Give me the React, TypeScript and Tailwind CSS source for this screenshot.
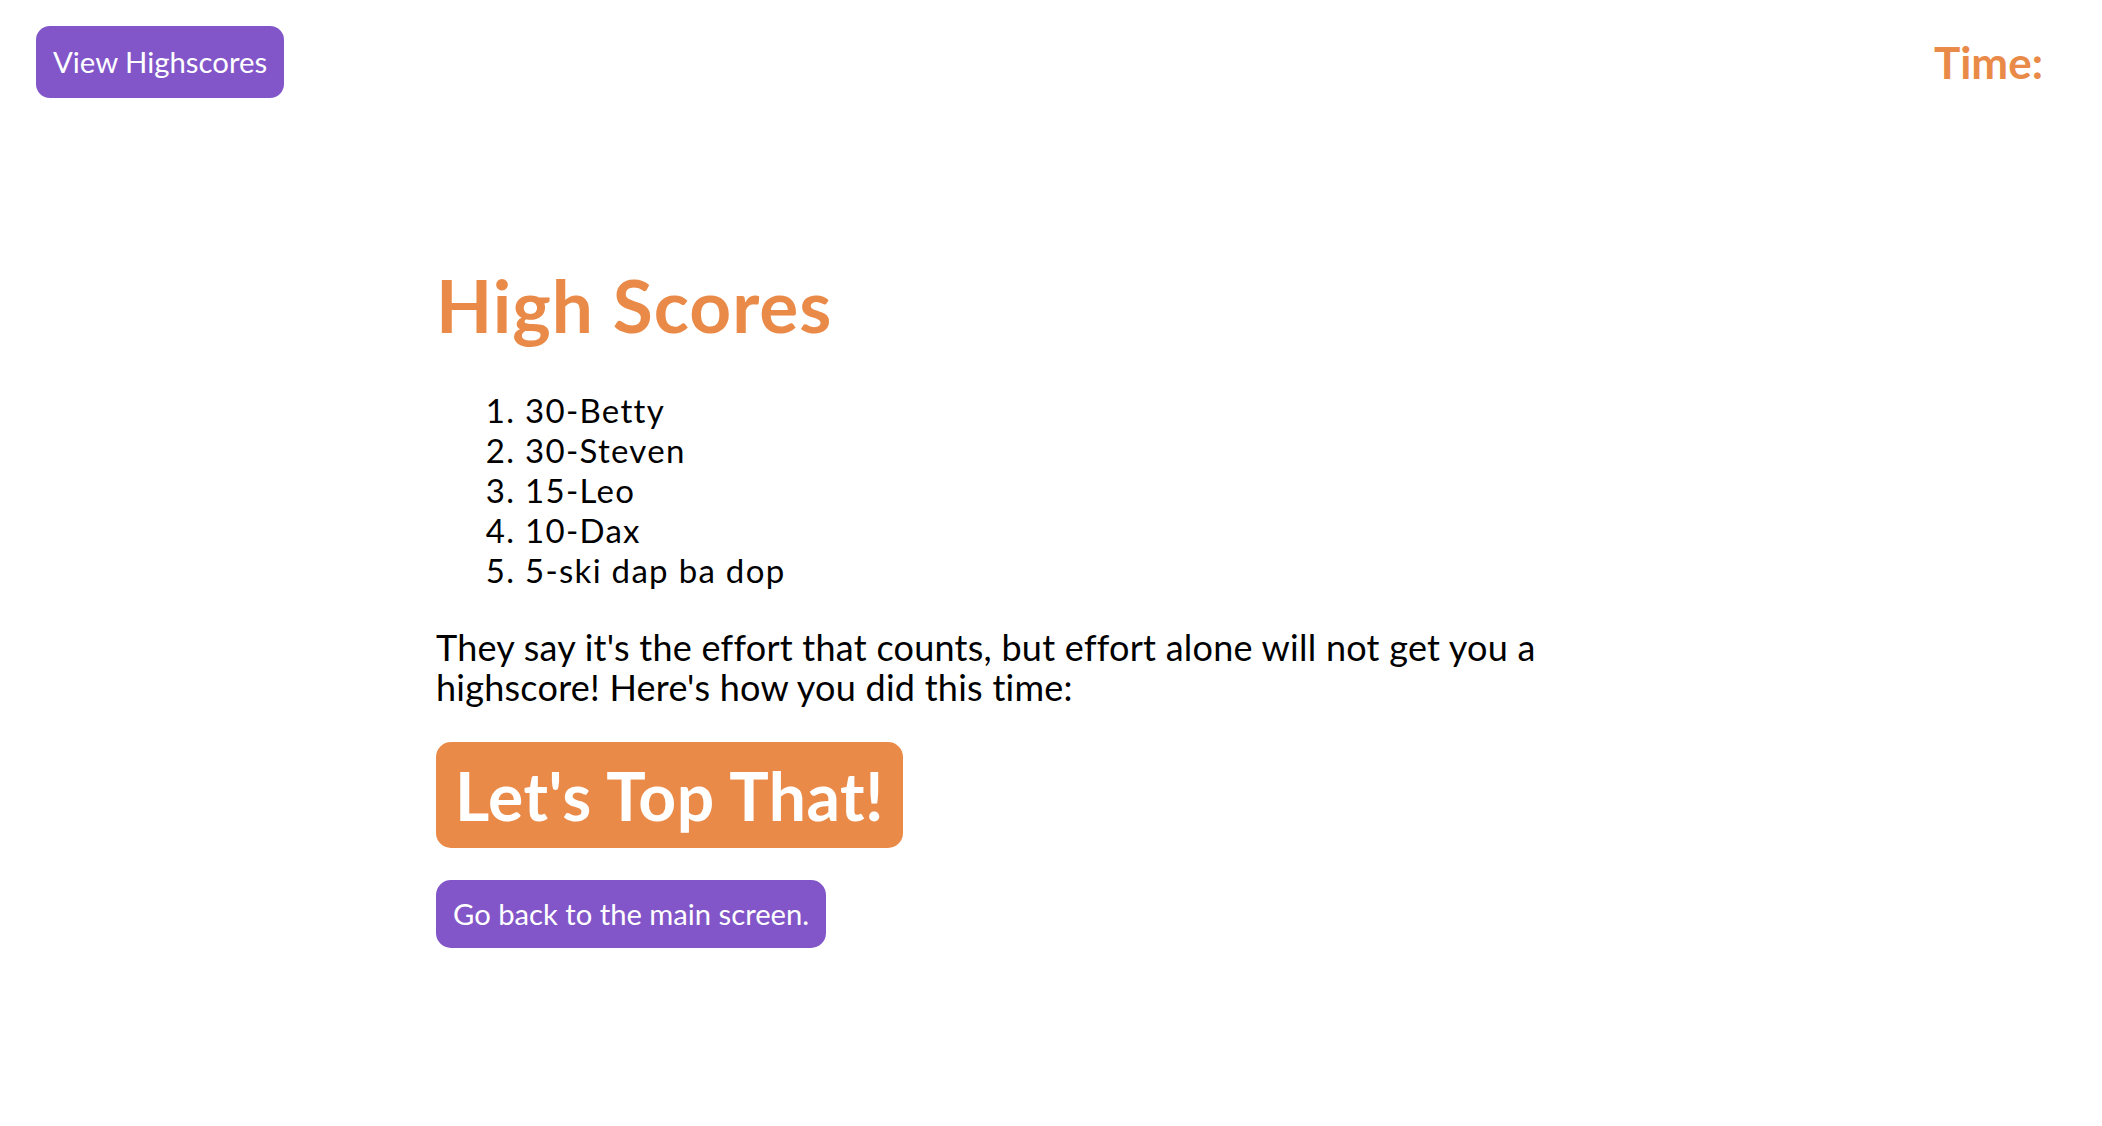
import React from "react";

export default function App() {
  const scores = ["30-Betty", "30-Steven", "15-Leo", "10-Dax", "5-ski dap ba dop"];
  return (
    <div className="min-h-screen bg-white font-['Lato',sans-serif] text-black">
      <header className="flex items-center justify-between pl-[36px] pr-[59px] pt-[26px]">
        <button className="h-[72px] rounded-[14px] bg-[#8256c9] px-[17px] text-[29.3px] text-white">
          View Highscores
        </button>
        <div className="text-[44px] font-bold leading-none text-[#ea8a48]">Time:</div>
      </header>
      <main className="mx-auto w-[1230px]">
        <h1 className="mt-[164px] text-[73px] font-bold leading-[86px] tracking-[1px] text-[#ea8a48]">High Scores</h1>
        <ol className="mt-[42px] list-decimal pl-[89px] text-[33px] leading-[40px] tracking-[1.3px]">
          {scores.map((s) => (
            <li key={s}>{s}</li>
          ))}
        </ol>
        <p className="mt-[37px] text-[36px] leading-[40px] tracking-[0.25px]">
          They say it's the effort that counts, but effort alone will not get you a highscore! Here's how you did this time:
        </p>
        <div className="mt-[35px]">
          <button className="h-[106px] rounded-[15px] bg-[#ea8a48] px-[19px] text-[66px] font-bold tracking-[0.5px] text-white">
            Let's Top That!
          </button>
        </div>
        <div className="mt-[32px]">
          <button className="h-[68px] rounded-[15px] bg-[#8256c9] px-[17px] text-[29.2px] text-white">
            Go back to the main screen.
          </button>
        </div>
      </main>
    </div>
  );
}
